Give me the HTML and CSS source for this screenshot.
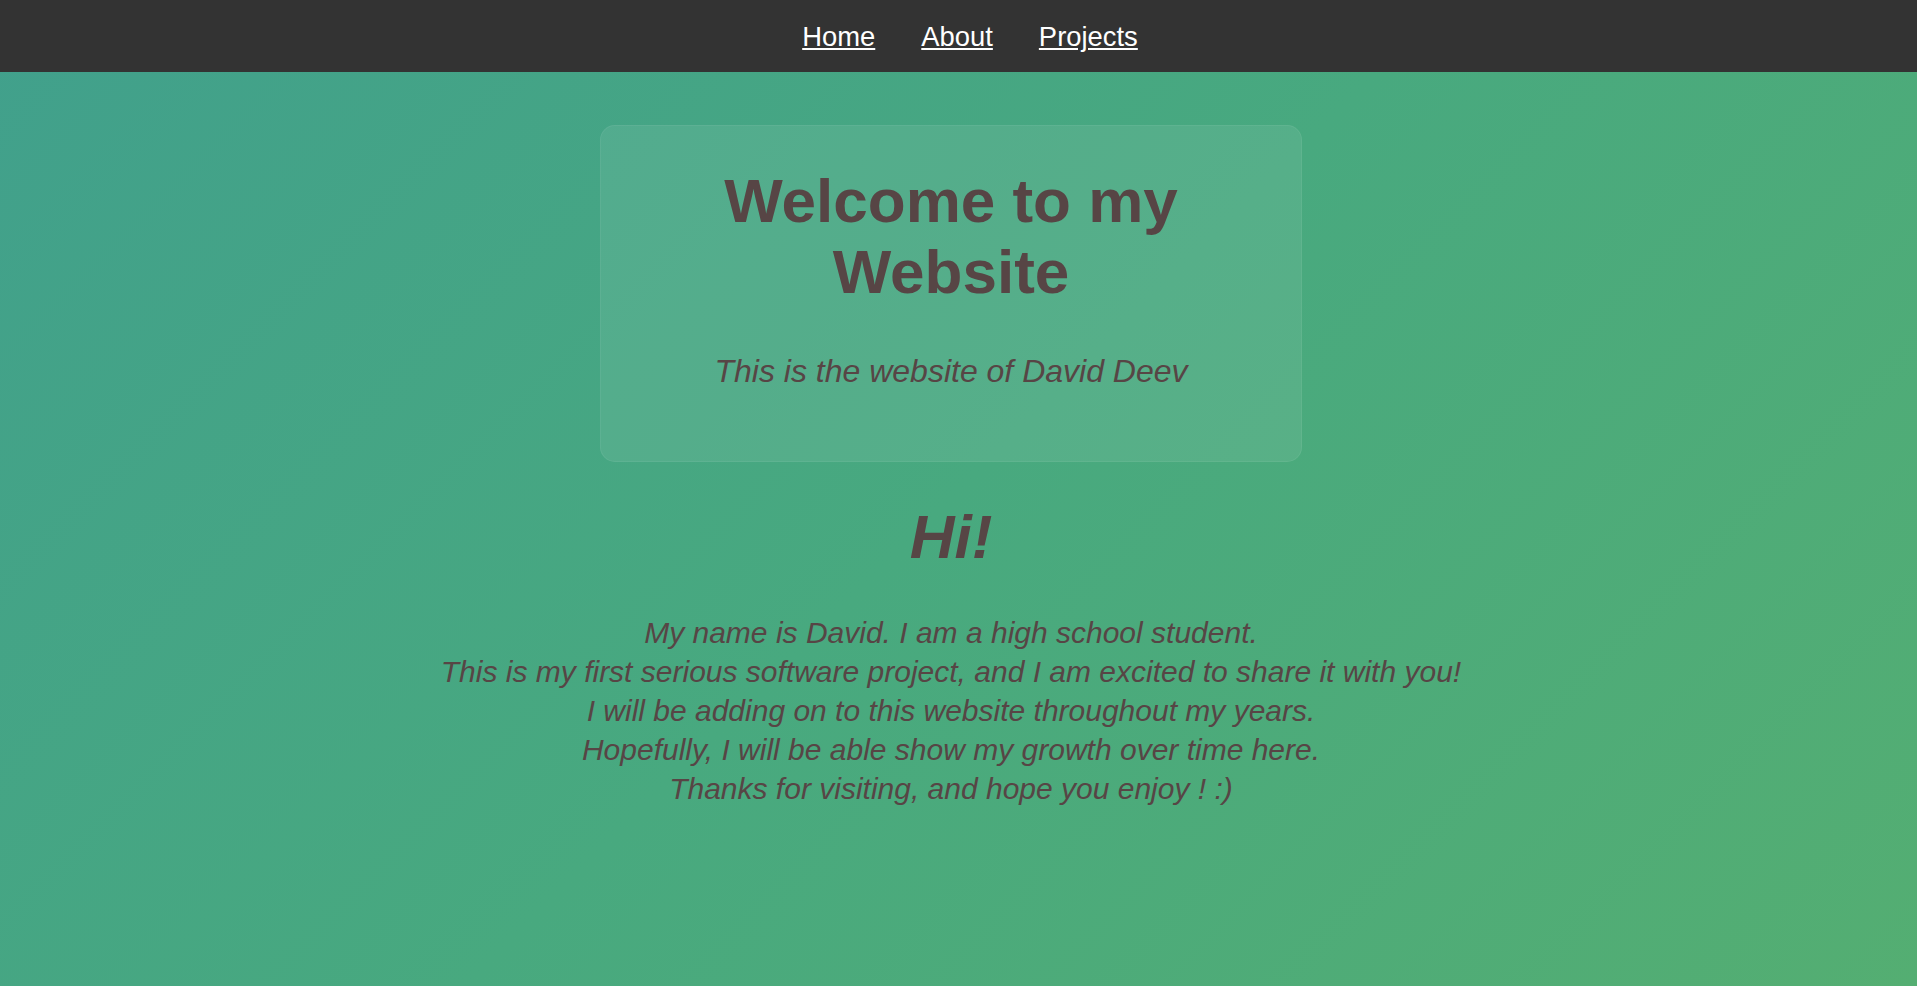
FILE: index.html
```html
<!DOCTYPE html>
<html lang="en">
<head>
<meta charset="utf-8">
<title>David Deev</title>
<link rel="stylesheet" href="styles.css">
</head>
<body>
<nav class="topnav">
  <a class="navlink" href="#">Home</a>
  <a class="navlink" href="#">About</a>
  <a class="navlink" href="#">Projects</a>
</nav>
<main class="page">
  <section class="hero">
    <h1 class="hero-title">Welcome to my<br>Website</h1>
    <p class="hero-sub">This is the website of David Deev</p>
  </section>
  <h1 class="hi">Hi!</h1>
  <p class="intro">My name is David. I am a high school student.<br>This is my first serious software project, and I am excited to share it with you!<br>I will be adding on to this website throughout my years.<br>Hopefully, I will be able show my growth over time here.<br>Thanks for visiting, and hope you enjoy ! :)</p>
</main>
</body>
</html>
```
FILE: styles.css
```css
html, body {
  margin: 0;
  padding: 0;
}
body {
  font-family: "Liberation Sans", Arial, sans-serif;
  color: #574545;
  background: linear-gradient(135deg, #41a08c 0%, #48a97f 50%, #54ae72 100%) fixed;
}
.topnav {
  height: 72px;
  box-sizing: border-box;
  padding: 2px 15px 0 38px;
  background: #333333;
  display: flex;
  justify-content: center;
  align-items: center;
  gap: 46px;
}
.navlink {
  color: #ffffff;
  font-size: 27.4px;
  text-decoration: underline;
}
.page {
  min-height: 1608px;
  box-sizing: border-box;
  padding-top: 53px;
  padding-right: 15px;
  display: flex;
  flex-direction: column;
  align-items: center;
}
.hero {
  width: 702px;
  box-sizing: border-box;
  padding: 39px 40px 71px;
  background: rgba(255, 255, 255, 0.08);
  border: 1px solid rgba(255, 255, 255, 0.06);
  border-radius: 15px;
  text-align: center;
}
.hero-title {
  font-size: 62px;
  font-weight: bold;
  margin: 0 0 46px;
}
.hero-sub {
  font-size: 32px;
  font-style: italic;
  margin: 0;
}
.hi {
  font-size: 62px;
  font-weight: bold;
  font-style: italic;
  margin: 39px 0 41px;
  text-align: center;
}
.intro {
  font-size: 30px;
  font-style: italic;
  line-height: 39px;
  text-align: center;
  margin: 0;
}
```
